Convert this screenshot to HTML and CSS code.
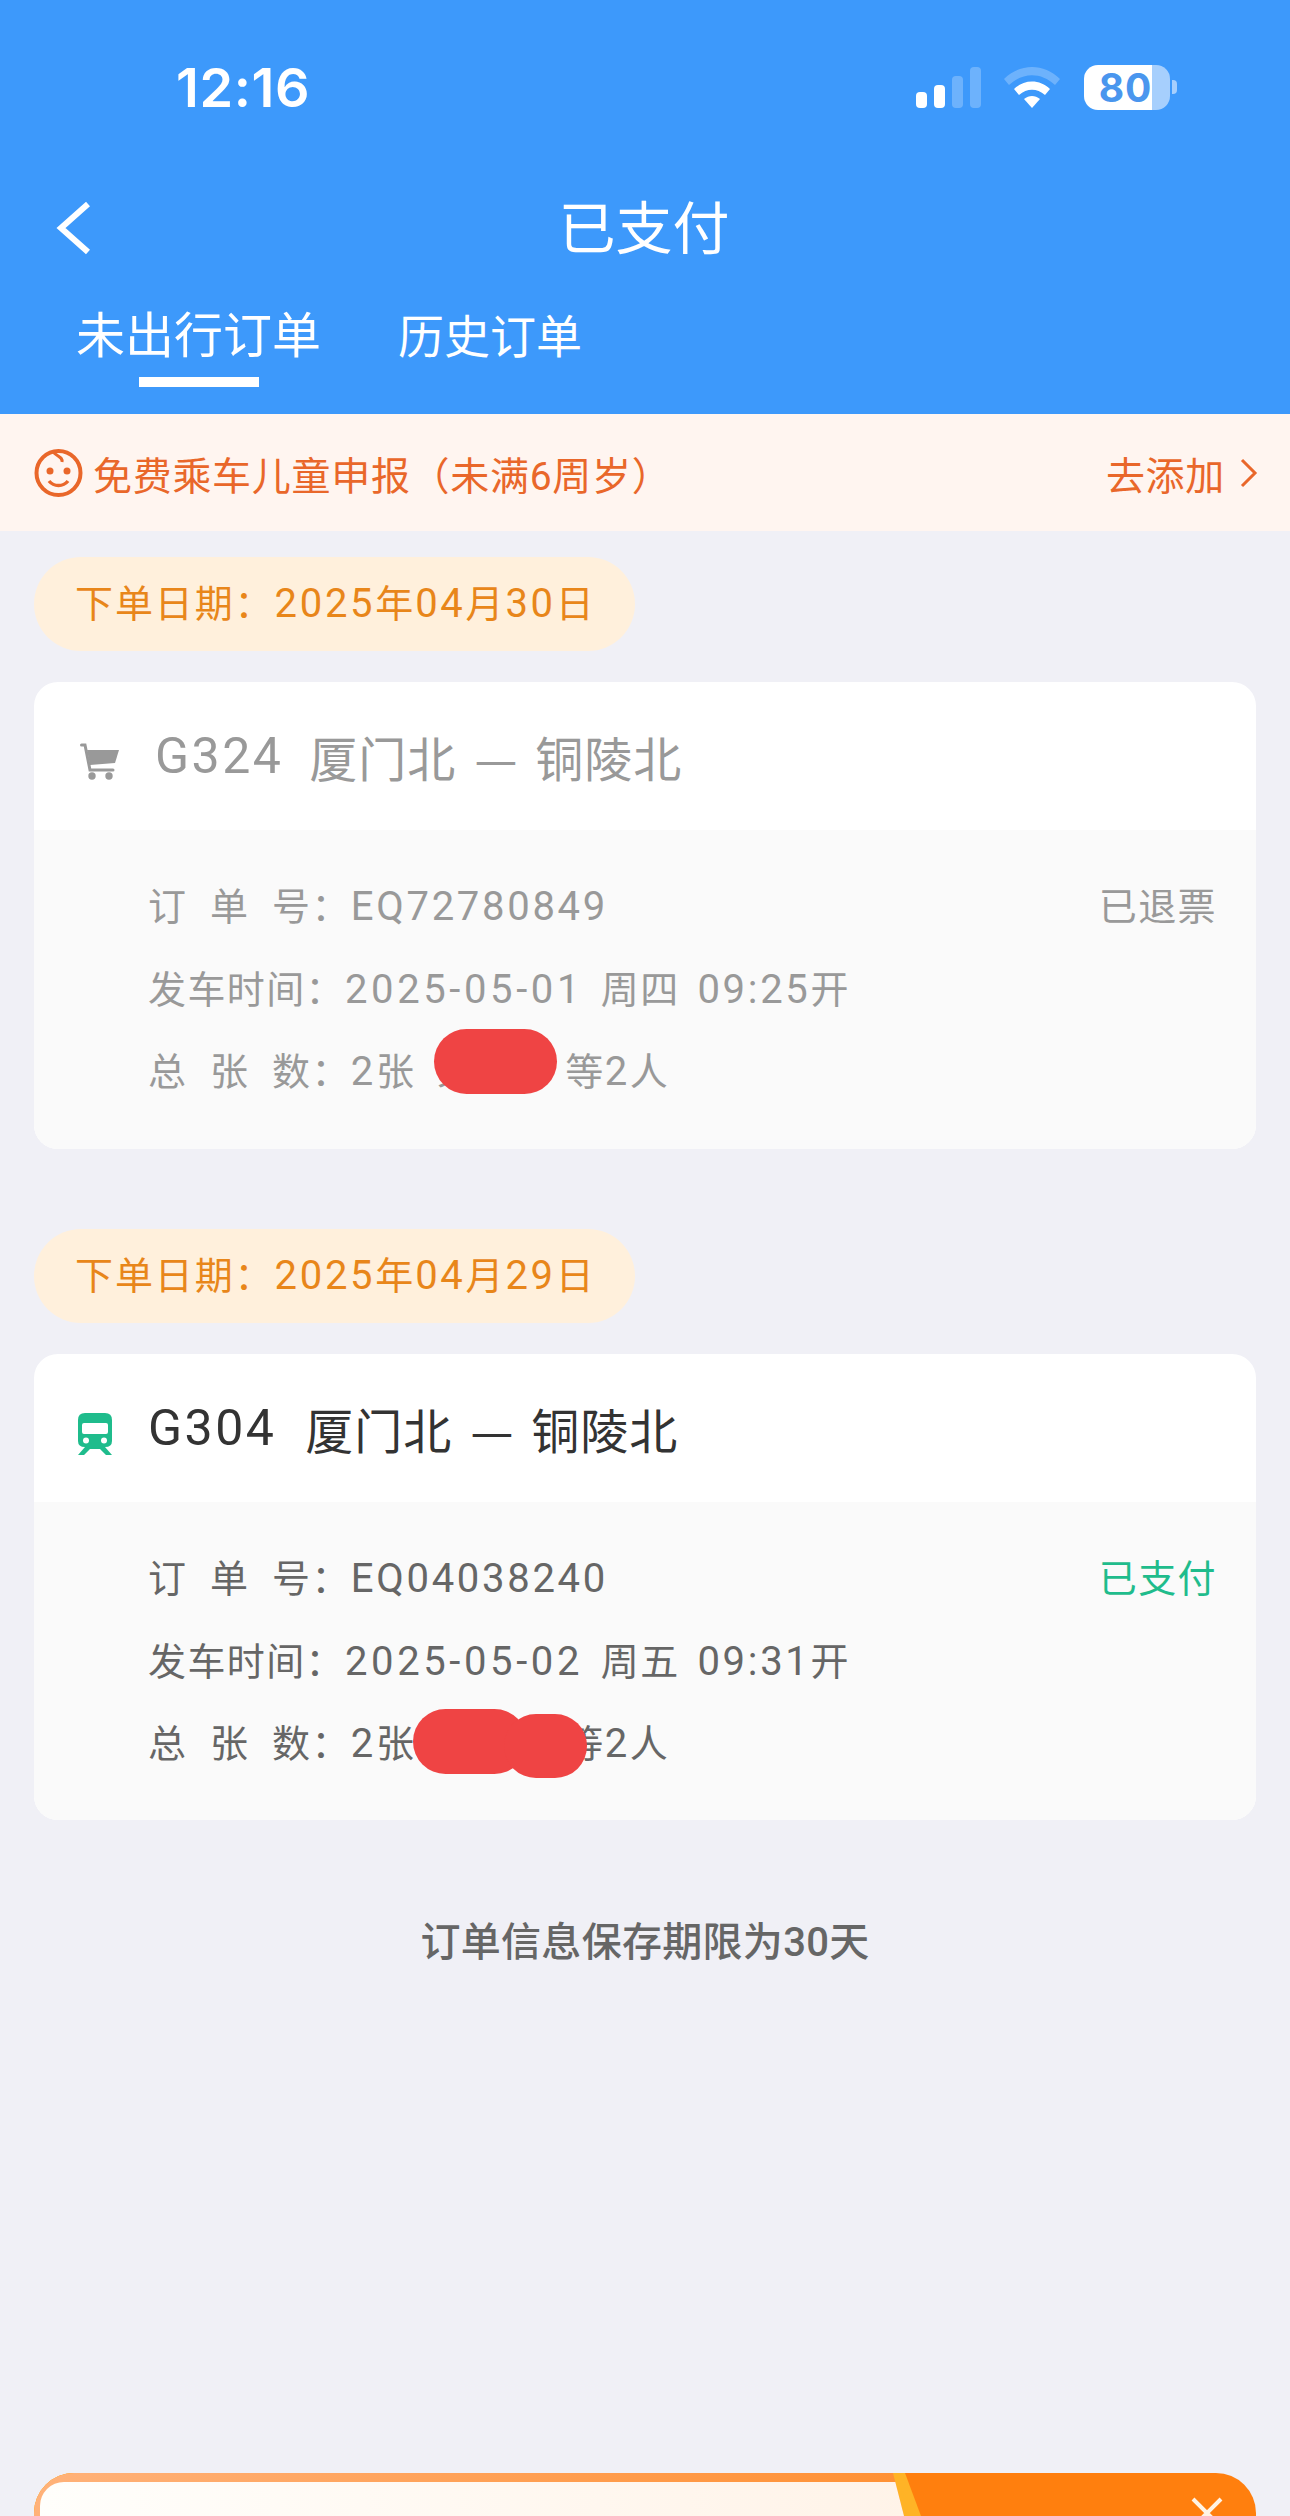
FILE: index.html
```html
<!DOCTYPE html>
<html>
  <head>
    <meta charset="UTF-8">
    <title>已支付</title>
    <link rel="stylesheet" href="styles.css">
  </head>
  <body>
    <header class="top">
      <div class="status">
        <span class="clock">12:16</span>
        <div class="status-icons">
          <svg class="signal" width="65" height="41" viewBox="0 0 65 41">
            <rect x="0" y="25" width="11" height="16" rx="4" fill="#fff"/>
            <rect x="18" y="18" width="11" height="23" rx="4" fill="#fff"/>
            <rect x="36" y="9" width="11" height="32" rx="4" fill="#fff" opacity="0.25"/>
            <rect x="54" y="0" width="11" height="41" rx="4" fill="#fff" opacity="0.25"/>
          </svg>
          <svg class="wifi" width="56" height="41" viewBox="0 0 56 41">
            <path d="M0 12 C16 -4 40 -4 56 12 L51 18 C37 5 19 5 5 18 Z" fill="#fff" opacity="0.25"/>
            <path d="M10 22 C20 12 36 12 46 22 L41 28 C33 21 23 21 15 28 Z" fill="#fff"/>
            <path d="M20 32 C25 28 31 28 36 32 L28 41 Z" fill="#fff"/>
          </svg>
          <div class="battery">
            <div class="battery-body"><span class="battery-num">80</span></div>
            <div class="battery-nub"></div>
          </div>
        </div>
      </div>
      <div class="nav">
        <svg class="back" width="40" height="54" viewBox="0 0 40 54">
          <path d="M34 3 L7 27 L34 51" fill="none" stroke="#fff" stroke-width="6"/>
        </svg>
        <h1 class="nav-title">已支付</h1>
      </div>
      <div class="tabs">
        <div class="tab tab-on">
          <span class="tab-text">未出行订单</span>
          <span class="tab-line"></span>
        </div>
        <div class="tab">
          <span class="tab-text tab-small">历史订单</span>
        </div>
      </div>
    </header>

    <div class="notice">
      <svg class="baby" width="49" height="48" viewBox="0 0 49 48">
        <circle cx="24.5" cy="24" r="22" fill="none" stroke="#E9672A" stroke-width="4"/>
        <path d="M19 3 C24 8 29 8 28 13" fill="none" stroke="#E9672A" stroke-width="3"/>
        <circle cx="16" cy="22" r="3.5" fill="#E9672A"/>
        <circle cx="33" cy="22" r="3.5" fill="#E9672A"/>
        <path d="M15 32 C20 38 29 38 34 32" fill="none" stroke="#E9672A" stroke-width="3.5"/>
      </svg>
      <span class="notice-text">免费乘车儿童申报（未满6周岁）</span>
      <span class="notice-link">去添加</span>
      <svg class="notice-arrow" width="18" height="30" viewBox="0 0 18 30">
        <path d="M2 2 L15 15 L2 28" fill="none" stroke="#E9672A" stroke-width="3"/>
      </svg>
    </div>

    <main class="orders">
      <div class="date-pill">下单日期：<span class="num">2025</span>年<span class="num">04</span>月<span class="num">30</span>日</div>
      <section class="card card-off">
        <div class="card-head">
          <svg class="cart" width="39" height="37" viewBox="0 0 39 37">
            <path d="M7 7 H39 L35 20 L10 22 Z" fill="#999"/>
            <path d="M1.5 2 H5 L10 27 H33" fill="none" stroke="#999" stroke-width="3" stroke-linecap="round"/>
            <circle cx="12" cy="33" r="3.7" fill="#999"/>
            <circle cx="29" cy="33" r="3.7" fill="#999"/>
          </svg>
          <span class="train-no">G324</span>
          <span class="station">厦门北</span>
          <span class="dash">—</span>
          <span class="station">铜陵北</span>
        </div>
        <div class="card-body">
          <div class="row">
            <span><span class="spread">订单</span>号：<span class="num">EQ72780849</span></span>
            <span class="state">已退票</span>
          </div>
          <div class="row"><span>发车时间：<span class="num date">2025-05-01</span> 周四 <span class="num">09:25</span>开</span></div>
          <div class="row"><span><span class="spread">总张</span>数：<span class="num">2</span>张 <span class="name">乘客</span>等<span class="num">2</span>人</span></div>
          <div class="blot blot-one"></div>
        </div>
      </section>

      <div class="date-pill pill-next">下单日期：<span class="num">2025</span>年<span class="num">04</span>月<span class="num">29</span>日</div>
      <section class="card">
        <div class="card-head">
          <svg class="train" width="34" height="42" viewBox="0 0 34 42">
            <path d="M7 0 H27 Q34 0 34 7 V28 Q34 34 27 34 H7 Q0 34 0 28 V7 Q0 0 7 0 Z M6 10 Q4 10 4 12 V19 Q4 21 6 21 H28 Q30 21 30 19 V12 Q30 10 28 10 Z" fill="#1FBC8C" fill-rule="evenodd"/>
            <circle cx="8" cy="27.5" r="3" fill="#fff"/>
            <circle cx="26" cy="27.5" r="3" fill="#fff"/>
            <path d="M7 34 L0 42 H6 L12 36 H22 L28 42 H34 L27 34 Z" fill="#1FBC8C"/>
          </svg>
          <span class="train-no">G304</span>
          <span class="station">厦门北</span>
          <span class="dash">—</span>
          <span class="station">铜陵北</span>
        </div>
        <div class="card-body">
          <div class="row">
            <span><span class="spread">订单</span>号：<span class="num">EQ04038240</span></span>
            <span class="state state-paid">已支付</span>
          </div>
          <div class="row"><span>发车时间：<span class="num date">2025-05-02</span> 周五 <span class="num">09:31</span>开</span></div>
          <div class="row"><span><span class="spread">总张</span>数：<span class="num">2</span>张 <span class="name">乘客</span>等<span class="num">2</span>人</span></div>
          <div class="blot blot-two"></div>
          <div class="blot blot-three"></div>
        </div>
      </section>

      <p class="keep-note">订单信息保存期限为30天</p>
    </main>

    <div class="promo">
      <div class="promo-edge">
        <div class="promo-band">
          <div class="promo-panel"></div>
        </div>
      </div>
      <svg class="promo-close" width="32" height="32" viewBox="0 0 32 32">
        <path d="M2 2 L30 30 M30 2 L2 30" fill="none" stroke="#fff3e4" stroke-width="4"/>
      </svg>
    </div>
  </body>
</html>
```

FILE: styles.css
```css
* {
  box-sizing: border-box;
}

html,
body {
  margin: 0;
  height: 2516px;
  overflow: hidden;
}

body {
  display: flex;
  flex-direction: column;
  background-color: #f0f0f6;
  font-family: Roboto, "Noto Sans CJK SC", sans-serif;
  color: #333;
}

/* blue header */
.top {
  height: 414px;
  flex-shrink: 0;
  background-color: #3d99fb;
  color: #fff;
}

.status {
  height: 174px;
  display: flex;
  align-items: center;
  justify-content: space-between;
  padding: 0 113px 0 176px;
}

.clock {
  font-family: Inter, sans-serif;
  font-size: 54px;
  font-weight: 600;
  letter-spacing: 0.6px;
}

.status-icons {
  display: flex;
  align-items: center;
}

.signal {
  margin-right: 23px;
}

.wifi {
  margin-right: 24px;
}

.battery {
  display: flex;
  align-items: center;
}

.battery-body {
  width: 86px;
  height: 45px;
  border-radius: 14px;
  background: linear-gradient(to right, #fff 79%, #a6cffd 79%);
  display: flex;
  align-items: center;
  justify-content: center;
}

.battery-num {
  font-family: Inter, sans-serif;
  font-size: 39px;
  font-weight: 700;
  letter-spacing: 1px;
  color: #4a96ee;
  padding-right: 3px;
}

.battery-nub {
  width: 5px;
  height: 14px;
  margin-left: 2px;
  border-radius: 0 4px 4px 0;
  background-color: #a6cffd;
}

.nav {
  height: 108px;
  display: flex;
  align-items: center;
  justify-content: center;
  position: relative;
}

.back {
  position: absolute;
  left: 54px;
  top: 27px;
}

.nav-title {
  margin: 0 2px 8px 0;
  font-size: 57px;
  font-weight: 400;
}

.tabs {
  display: flex;
  gap: 77px;
  padding-left: 76px;
}

.tab {
  display: flex;
  flex-direction: column;
  align-items: center;
  padding-top: 11px;
}

.tab-text {
  height: 84px;
  line-height: 88px;
  font-size: 49px;
}

.tab-small {
  font-size: 46px;
}

.tab-line {
  width: 120px;
  height: 10px;
  background-color: #fff;
}

/* child notice */
.notice {
  height: 117px;
  flex-shrink: 0;
  display: flex;
  align-items: center;
  padding: 0 32px 0 34px;
  background-color: #fff5f0;
  color: #e9672a;
  font-size: 39px;
  letter-spacing: 0.7px;
}

.baby {
  margin-right: 10px;
}

.notice-text {
  flex: 1;
}

.notice-arrow {
  margin-left: 15px;
}

/* orders */
.orders {
  padding: 0 34px;
}

.date-pill {
  width: 601px;
  height: 94px;
  margin-top: 26px;
  padding-left: 41px;
  border-radius: 47px;
  background-color: #fff0dc;
  color: #e8861a;
  font-size: 38px;
  line-height: 94px;
  letter-spacing: 1.9px;
  white-space: nowrap;
}

.pill-next {
  margin-top: 80px;
}

.card {
  margin-top: 31px;
  border-radius: 24px;
  overflow: hidden;
  background-color: #fff;
}

.card-head {
  height: 148px;
  display: flex;
  align-items: center;
  padding-left: 44px;
  font-size: 48px;
  color: #333;
}

.card-off .card-head {
  color: #999;
  padding-left: 46px;
}

.cart {
  margin-right: 36px;
  margin-top: 11px;
}

.train {
  margin-right: 36px;
  margin-top: 12px;
}

.train-no {
  font-size: 50px;
  letter-spacing: 2.5px;
  margin-right: 29px;
}

.card-off .train-no {
  margin-right: 26px;
}

.station {
  letter-spacing: 1px;
}

.dash {
  font-family: "Noto Sans CJK SC", sans-serif;
  margin: 0 18px;
}

.card-body {
  height: 318px;
  padding: 36px 39px 0 114px;
  background-color: #fafafa;
  color: #666;
  font-size: 38px;
  line-height: 82.5px;
  letter-spacing: 1.4px;
  word-spacing: 7px;
  position: relative;
}

.card-off .card-body {
  height: 319px;
  color: #999;
}

.row {
  height: 82.5px;
  display: flex;
  justify-content: space-between;
  white-space: pre;
}

.spread {
  letter-spacing: 24px;
}

.num {
  font-size: 40px;
  letter-spacing: 2.7px;
}

.date {
  letter-spacing: 3.6px;
}

.state {
  color: #999;
}

.state-paid {
  color: #1fbc8c;
}

.name {
  display: inline-block;
  width: 128px;
  margin-left: 4px;
}

/* red marks over the passenger names */
.blot {
  position: absolute;
  background-color: #ef4444;
  border-radius: 33px;
}

.blot-one {
  left: 400px;
  top: 199px;
  width: 123px;
  height: 65px;
}

.blot-two {
  left: 379px;
  top: 207px;
  width: 114px;
  height: 65px;
}

.blot-three {
  left: 470px;
  top: 212px;
  width: 83px;
  height: 64px;
}

.keep-note {
  margin: 98px 0 0;
  text-align: center;
  color: #666;
  font-size: 40px;
  font-weight: 500;
  line-height: 50px;
  letter-spacing: 0.3px;
}

/* promo strip cut off by the bottom of the screen */
.promo {
  height: 43px;
  margin: auto 34px 0;
  display: flex;
  justify-content: space-between;
  border-radius: 40px 40px 0 0;
  overflow: hidden;
  background-color: #ff7f0e;
  position: relative;
}

.promo-edge {
  width: 887px;
  background-color: #ffb326;
  clip-path: polygon(0 0, 871px 0, 100% 100%, 0 100%);
}

.promo-band {
  height: 100%;
  padding: 9px 0 0 6px;
  background: linear-gradient(to right, #ffb27a, #ff9033);
  clip-path: polygon(0 0, 859px 0, 870px 100%, 0 100%);
}

.promo-panel {
  height: 100%;
  border-radius: 24px 0 0 0;
  background: linear-gradient(to right, #fffefb, #fff3e8);
}

.promo-close {
  margin: 24px 33px 0 0;
}
```
